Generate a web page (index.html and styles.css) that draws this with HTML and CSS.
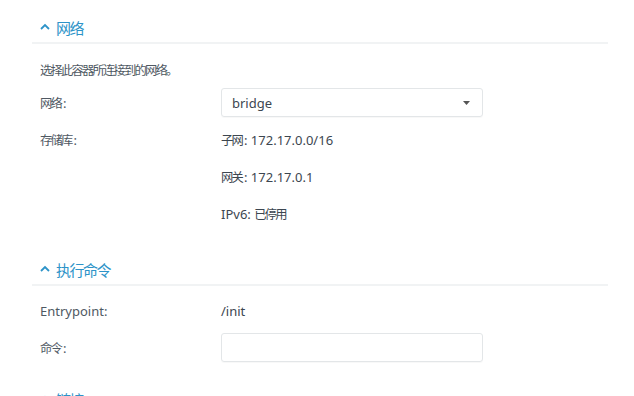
FILE: index.html
```html
<!DOCTYPE html>
<html lang="zh">
<head>
<meta charset="utf-8">
<link rel="stylesheet" href="styles.css">
</head>
<body>
<div class="page">
  <section class="section">
    <div class="sec-head">
      <svg class="chev" width="10" height="7" viewBox="0 0 10 7"><polyline points="1,6 5,2 9,6" fill="none" stroke="#2d93c8" stroke-width="1.8"/></svg>
      <span class="zh head-text">网络</span>
    </div>
    <div class="sec-body">
      <div class="intro"><span class="zh">选择此容器所连接到的网络。</span></div>
      <div class="row">
        <div class="label"><span class="zh">网络</span>:</div>
        <div class="value">
          <div class="select">
            <span>bridge</span>
            <svg width="7" height="4" viewBox="0 0 7 4"><polygon points="0,0 7,0 3.5,4" fill="#555"/></svg>
          </div>
        </div>
      </div>
      <div class="row">
        <div class="label"><span class="zh">存储库</span>:</div>
        <div class="value"><span class="zh">子网</span>: 172.17.0.0/16</div>
      </div>
      <div class="row">
        <div class="label"></div>
        <div class="value"><span class="zh">网关</span>: 172.17.0.1</div>
      </div>
      <div class="row">
        <div class="label"></div>
        <div class="value">IPv6: <span class="zh">已停用</span></div>
      </div>
    </div>
  </section>
  <section class="section">
    <div class="sec-head">
      <svg class="chev" width="10" height="7" viewBox="0 0 10 7"><polyline points="1,6 5,2 9,6" fill="none" stroke="#2d93c8" stroke-width="1.8"/></svg>
      <span class="zh head-text">执行命令</span>
    </div>
    <div class="sec-body tight">
      <div class="row">
        <div class="label">Entrypoint:</div>
        <div class="value">/init</div>
      </div>
      <div class="row">
        <div class="label"><span class="zh">命令</span>:</div>
        <div class="value"><div class="input"></div></div>
      </div>
    </div>
  </section>
  <section class="section">
    <div class="sec-head">
      <svg class="chev" width="10" height="7" viewBox="0 0 10 7"><polyline points="1,6 5,2 9,6" fill="none" stroke="#2d93c8" stroke-width="1.8"/></svg>
      <span class="zh head-text">链接</span>
    </div>
  </section>
</div>
</body>
</html>
```
FILE: styles.css
```css
html, body {
  margin: 0;
  padding: 0;
  background: #fff;
}
body {
  font-family: "Noto Sans", "Noto Sans CJK SC", sans-serif;
  font-size: 13px;
  color: #4f5963;
  overflow: hidden;
  height: 396px;
}
.page {
  padding: 17px 26px 0 32px;
}
.zh {
  letter-spacing: -1.8px;
  font-size: 12.3px;
  margin-right: 2px;
}
.sec-head {
  display: flex;
  align-items: center;
  height: 20px;
  padding: 0 0 5px 8px;
  border-bottom: 2px solid #f1f3f4;
  color: #2d93c8;
}
.chev {
  margin-right: 6px;
  margin-top: -2px;
}
.head-text {
  font-size: 15px;
  letter-spacing: -1.5px;
}
.sec-body {
  padding-left: 8px;
}
.intro {
  height: 28px;
  padding-top: 12px;
  display: flex;
  align-items: center;
}
.row {
  display: flex;
  align-items: center;
  height: 37px;
}
.label {
  width: 181px;
}
.value {
  color: #3c4650;
}
.tight {
  padding-top: 6px;
}
.section + .section {
  margin-top: 27px;
}
.section:last-child {
  margin-top: 23px;
}
.select, .input {
  box-sizing: border-box;
  width: 262px;
  height: 29px;
  border: 1px solid #e3e6e8;
  border-radius: 3px;
  box-shadow: 0 1px 1px rgba(0,0,0,0.03);
}
.select {
  display: flex;
  align-items: center;
  justify-content: space-between;
  padding: 0 12px 0 10px;
  color: #3c4650;
}
```
